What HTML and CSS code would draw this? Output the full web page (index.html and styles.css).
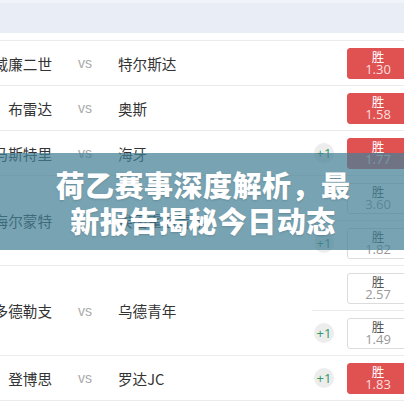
FILE: index.html
```html
<!DOCTYPE html>
<html>
<head>
    <title>荷乙赛事</title>
    <meta charset="utf-8">
    <link rel="stylesheet" href="styles.css">
</head>
<body>
    <div class="page">
        <div class="head"></div>
        <div class="list">
            <div class="match">
                <div class="teams">
                    <div class="home"><span>威廉二世</span></div>
                    <div class="vs">vs</div>
                    <div class="away">特尔斯达</div>
                </div>
                <div class="bets">
                    <div class="bet"><div class="odds hot"><b>胜</b><i>1.30</i></div></div>
                </div>
            </div>
            <div class="match">
                <div class="teams">
                    <div class="home"><span>布雷达</span></div>
                    <div class="vs">vs</div>
                    <div class="away">奥斯</div>
                </div>
                <div class="bets">
                    <div class="bet"><div class="odds hot"><b>胜</b><i>1.58</i></div></div>
                </div>
            </div>
            <div class="match">
                <div class="teams">
                    <div class="home"><span>马斯特里</span></div>
                    <div class="vs">vs</div>
                    <div class="away">海牙</div>
                </div>
                <div class="bets">
                    <div class="bet"><span class="plus">+1</span><div class="odds hot"><b>胜</b><i>1.77</i></div></div>
                </div>
            </div>
            <div class="match">
                <div class="teams">
                    <div class="home"><span>海尔蒙特</span></div>
                    <div class="vs">vs</div>
                    <div class="away">埃因霍温青年</div>
                </div>
                <div class="bets">
                    <div class="bet"><div class="odds"><b>胜</b><i>3.60</i></div></div>
                    <div class="bet"><span class="plus">+1</span><div class="odds"><b>胜</b><i>1.82</i></div></div>
                </div>
            </div>
            <div class="match">
                <div class="teams">
                    <div class="home"><span>多德勒支</span></div>
                    <div class="vs">vs</div>
                    <div class="away">乌德青年</div>
                </div>
                <div class="bets">
                    <div class="bet"><div class="odds"><b>胜</b><i>2.57</i></div></div>
                    <div class="bet"><span class="plus">+1</span><div class="odds"><b>胜</b><i>1.49</i></div></div>
                </div>
            </div>
            <div class="match">
                <div class="teams">
                    <div class="home"><span>登博思</span></div>
                    <div class="vs">vs</div>
                    <div class="away">罗达JC</div>
                </div>
                <div class="bets">
                    <div class="bet"><span class="plus">+1</span><div class="odds hot"><b>胜</b><i>1.83</i></div></div>
                </div>
            </div>
        </div>
        <div class="banner">
            <h1>荷乙赛事深度解析，最新报告揭秘今日动态</h1>
        </div>
    </div>
</body>
</html>
```

FILE: styles.css
```css
body {
    margin: 0;
    overflow: hidden;
    background-color: #fff;
    font-family: "Noto Sans CJK SC", "Noto Sans", sans-serif;
    color: #333;
}
.page {
    position: relative;
    width: 416px;
    height: 404px;
    overflow: hidden;
}
.head {
    height: 30px;
    background-color: #e8edf6;
    border-top: 3px solid #f0f3f9;
    margin-bottom: 7px;
}
.match {
    display: flex;
    border-top: 1px solid #ececec;
}
.match:last-child {
    border-bottom: 1px solid #ececec;
}
.teams {
    flex: 1;
    display: flex;
    align-items: center;
    font-size: 14.6px;
    white-space: nowrap;
}
.home {
    width: 52px;
    display: flex;
    justify-content: flex-end;
}
.home span {
    flex-shrink: 0;
}
.vs {
    width: 66px;
    text-align: center;
    color: #aaa;
    font-family: "Liberation Sans", sans-serif;
    font-size: 14px;
}
.bets {
    width: 104px;
}
.bet {
    height: 44px;
    display: flex;
    align-items: center;
    justify-content: flex-end;
    padding-right: 7px;
}
.bet + .bet {
    border-top: 1px solid #ececec;
}
.plus {
    width: 20px;
    height: 20px;
    border-radius: 50%;
    background-color: #ededed;
    color: #2e9a62;
    font-family: "Open Sans", sans-serif;
    font-size: 13px;
    line-height: 20px;
    text-align: center;
    margin-right: 13px;
}
.odds {
    width: 62px;
    height: 31px;
    box-sizing: border-box;
    border: 1px solid #dcdcdc;
    border-radius: 3px;
    display: flex;
    flex-direction: column;
    align-items: center;
    justify-content: center;
    font-size: 13px;
    line-height: 13px;
}
.odds b {
    font-weight: normal;
    color: #555;
    font-size: 12.5px;
}
.odds i {
    font-style: normal;
    color: #999;
    font-family: "Open Sans", sans-serif;
}
.odds.hot {
    background-color: #e05252;
    border-color: #e05252;
}
.odds.hot b {
    color: #fff;
}
.odds.hot i {
    color: #fcdede;
}
.banner {
    position: absolute;
    left: 0;
    right: 0;
    top: 153px;
    height: 97px;
    background-color: rgba(68, 128, 150, 0.72);
    display: flex;
    align-items: center;
    justify-content: center;
}
.banner h1 {
    margin: 0 0 0 -10px;
    width: 300px;
    text-align: center;
    color: #fff;
    font-size: 29px;
    font-weight: 900;
    line-height: 36px;
    letter-spacing: 0.5px;
    text-shadow: 0 1px 2px rgba(0, 0, 0, 0.15);
}
```
